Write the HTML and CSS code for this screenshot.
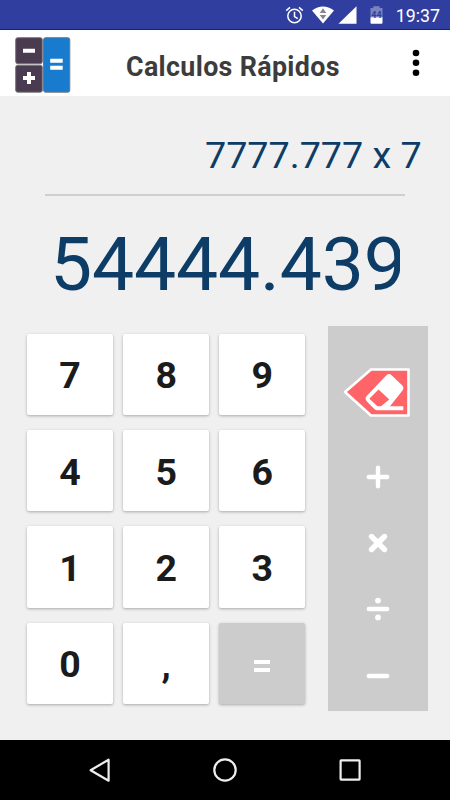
FILE: index.html
```html
<!DOCTYPE html>
<html lang="es">
  <head>
    <meta charset="UTF-8" />
    <meta name="viewport" content="width=device-width, initial-scale=1" />
    <title>Calculos Rápidos</title>
    <link rel="stylesheet" href="styles.css">
  </head>
  <body>
    <!-- Barra de estado -->
    <div class="status-bar">
      <svg class="status-icons" width="100" height="20" viewBox="0 0 100 20">
        <g fill="none" stroke="#fff" stroke-width="1.5">
          <circle cx="9.5" cy="11" r="6.7" />
          <path d="M9.5 6.8V11.6L12.8 13.6M1.2 5.6L5 2.4M17.8 5.6L14 2.4" />
        </g>
        <path d="M27 5.5Q38 -2.3 49 5.5L38 18.5Z" fill="#fff" />
        <path d="M34.7 8.1L38 3.2L41.3 8.1ZM34.7 9.9H41.3L38 14.5Z" fill="#878792" />
        <path d="M71.5 1.3V18.7H53.5Z" fill="#fff" />
        <path d="M88.3 1.2H94.6V3H97.5V12.3H85.5V3H88.3Z" fill="#7983c0" />
        <path d="M85.5 12.3H97.5V17.7Q97.5 18.7 96.5 18.7H86.5Q85.5 18.7 85.5 17.7Z" fill="#fff" />
        <text x="91.5" y="13.2" class="battery-level">44</text>
      </svg>
      <span class="clock">19:37</span>
    </div>

    <!-- Cabecera -->
    <header>
      <svg class="logo" width="56" height="56" viewBox="0 0 56 56">
        <g stroke="#777" stroke-width="1">
          <rect x="0.7" y="0.7" width="26.6" height="26" rx="2" fill="#4b3b50" />
          <rect x="0.7" y="28.2" width="26.6" height="27" rx="2" fill="#4b3b50" />
          <rect x="28.5" y="0.7" width="26.3" height="54.5" rx="2" fill="#197bce" />
        </g>
        <path d="M8 11.7H20V15.7H8ZM12 35H16V39H20V43H16V47H12V43H8V39H12ZM35.2 21.7H47.7V25.7H35.2ZM35.2 28.7H47.7V32.7H35.2Z" fill="#fff" />
      </svg>
      <h1>Calculos Rápidos</h1>
      <svg class="menu" width="8" height="28" viewBox="0 0 8 28">
        <circle cx="4" cy="4" r="3.3" />
        <circle cx="4" cy="13.8" r="3.3" />
        <circle cx="4" cy="23.7" r="3.3" />
      </svg>
    </header>

    <main>
      <!-- Pantalla -->
      <div class="display">
        <div class="operation">7777.777 x 7</div>
        <div class="result">54444.439</div>
      </div>

      <div class="keyboard">
        <!-- Teclado numérico -->
        <div class="numbers">
          <button>7</button>
          <button>8</button>
          <button>9</button>
          <button>4</button>
          <button>5</button>
          <button>6</button>
          <button>1</button>
          <button>2</button>
          <button>3</button>
          <button>0</button>
          <button>,</button>
          <button class="equal" aria-label="igual">
            <svg width="18" height="14" viewBox="0 0 18 14">
              <path d="M1 1H17V5H1ZM1 9H17V13H1Z" fill="#fff" />
            </svg>
          </button>
        </div>

        <!-- Operadores -->
        <div class="operators">
          <button class="delete" aria-label="borrar">
            <svg width="68" height="50" viewBox="0 0 68 50">
              <path d="M2 24L28 1.5H65.5V47.5H28Z" fill="#ff6568" stroke="#fff" stroke-width="2.6" stroke-linejoin="round" />
              <path d="M43.4 7.3Q46 4.8 48.6 7.3L59.3 17.6Q61.6 20 59.3 22.7L47 38.3H60.3V42.3H34.5Q32.7 42.3 31.3 41L23.7 33.2Q21.4 30.5 23.7 28ZM35.5 21.6L26.3 30.7L34.5 38.3H38L46.3 31.4Z" fill="#fff" fill-rule="evenodd" />
            </svg>
          </button>
          <button aria-label="sumar">
            <svg width="24" height="24" viewBox="0 0 24 24">
              <path d="M2.8 12H21.2M12 2.8V21.2" />
            </svg>
          </button>
          <button aria-label="multiplicar">
            <svg width="24" height="24" viewBox="0 0 24 24">
              <path class="times" d="M5.5 5.5L18.5 18.5M18.5 5.5L5.5 18.5" />
            </svg>
          </button>
          <button aria-label="dividir">
            <svg width="24" height="24" viewBox="0 0 24 24">
              <path d="M2.8 12H21.2" />
              <circle cx="12" cy="3.6" r="2.9" />
              <circle cx="12" cy="20.4" r="2.9" />
            </svg>
          </button>
          <button aria-label="restar">
            <svg width="24" height="24" viewBox="0 0 24 24">
              <path d="M2.8 12H21.2" />
            </svg>
          </button>
        </div>
      </div>
    </main>

    <!-- Barra de navegación -->
    <nav>
      <svg width="26" height="26" viewBox="0 0 26 26"><path d="M21.6 2.7V23.7L3.6 13.2Z" /></svg>
      <svg width="26" height="26" viewBox="0 0 26 26"><circle cx="13" cy="13" r="10.7" /></svg>
      <svg width="26" height="26" viewBox="0 0 26 26"><rect x="3.6" y="3.4" width="19" height="19.2" rx="0.5" /></svg>
    </nav>
  </body>
</html>
```
FILE: styles.css
```css
* {
  box-sizing: border-box;
}
body {
  margin: 0;
  height: 800px;
  display: flex;
  flex-direction: column;
  overflow: hidden;
  background-color: #f0f0f0;
  font-family: Roboto, sans-serif;
}
svg {
  display: block;
  flex: none;
}
button {
  display: flex;
  align-items: center;
  justify-content: center;
  padding: 0;
  border: 0;
  font-family: inherit;
}

/* Barra de estado */
.status-bar {
  height: 30px;
  padding: 0 10px 0 0;
  display: flex;
  align-items: center;
  justify-content: flex-end;
  background-color: #303f9f;
  border-bottom: 1px solid #14208a;
  color: #fff;
}
.status-icons {
  margin: 1px 11px 0 0;
}
.battery-level {
  fill: #303f9f;
  font-size: 9px;
  font-weight: bold;
  text-anchor: middle;
}
.clock {
  font-size: 17.8px;
  line-height: 29px;
  padding-top: 2px;
}

/* Cabecera */
header {
  height: 66px;
  padding: 0 30px 0 15px;
  display: flex;
  align-items: center;
  background-color: #fff;
}
.logo {
  margin-top: 3px;
}
h1 {
  margin: 7px 0 0 55px;
  font-size: 26.8px;
  font-weight: bold;
  line-height: 32px;
  letter-spacing: 0.35px;
  color: #3c3c3c;
  white-space: nowrap;
}
.menu {
  margin-left: auto;
}

/* Pantalla */
main {
  flex: 1;
}
.display {
  height: 230px;
  padding: 0 45px;
  color: #0d3d66;
}
.operation {
  height: 100px;
  padding-top: 37px;
  border-bottom: 2px solid #cfcfcf;
  font-size: 37.7px;
  line-height: 44px;
  text-indent: 160px;
  white-space: nowrap;
}
.result {
  width: 355px;
  padding: 24px 0 0 5px;
  overflow: hidden;
  font-size: 75px;
  line-height: 88px;
  letter-spacing: -0.15px;
}

/* Teclado */
.keyboard {
  display: flex;
  align-items: flex-start;
  padding-left: 27px;
}
.numbers {
  display: grid;
  grid-template-columns: repeat(3, 86px);
  grid-auto-rows: 81.3px;
  gap: 15px 10.2px;
  margin: 7.8px 22.6px 0 0;
}
.numbers button {
  padding-top: 2px;
  background-color: #fff;
  border-radius: 2px;
  box-shadow: 0 1px 3px rgba(0, 0, 0, 0.3);
  color: #1b1b1b;
  font-size: 37.5px;
  font-weight: bold;
}
.numbers .equal {
  padding-top: 5px;
  background-color: #ccc;
}
.operators {
  width: 100px;
  height: 385px;
  padding-top: 32px;
  background-color: #ccc;
}
.operators button {
  width: 100px;
  height: 66.2px;
  background: none;
}
.operators .delete {
  height: 86px;
  padding: 0 2px 17px 0;
}
.operators button:not(.delete) svg {
  fill: #fff;
  stroke: #fff;
  stroke-width: 4.4px;
  stroke-linecap: round;
}
.operators button:not(.delete) circle {
  stroke: none;
}
.operators .times {
  stroke-width: 5.4px;
}

/* Barra de navegación */
nav {
  height: 60px;
  padding: 0 87px;
  display: flex;
  align-items: center;
  justify-content: space-between;
  background-color: #000;
}
nav svg {
  fill: none;
  stroke: #eee;
  stroke-width: 2.2px;
  stroke-linejoin: round;
}
```
